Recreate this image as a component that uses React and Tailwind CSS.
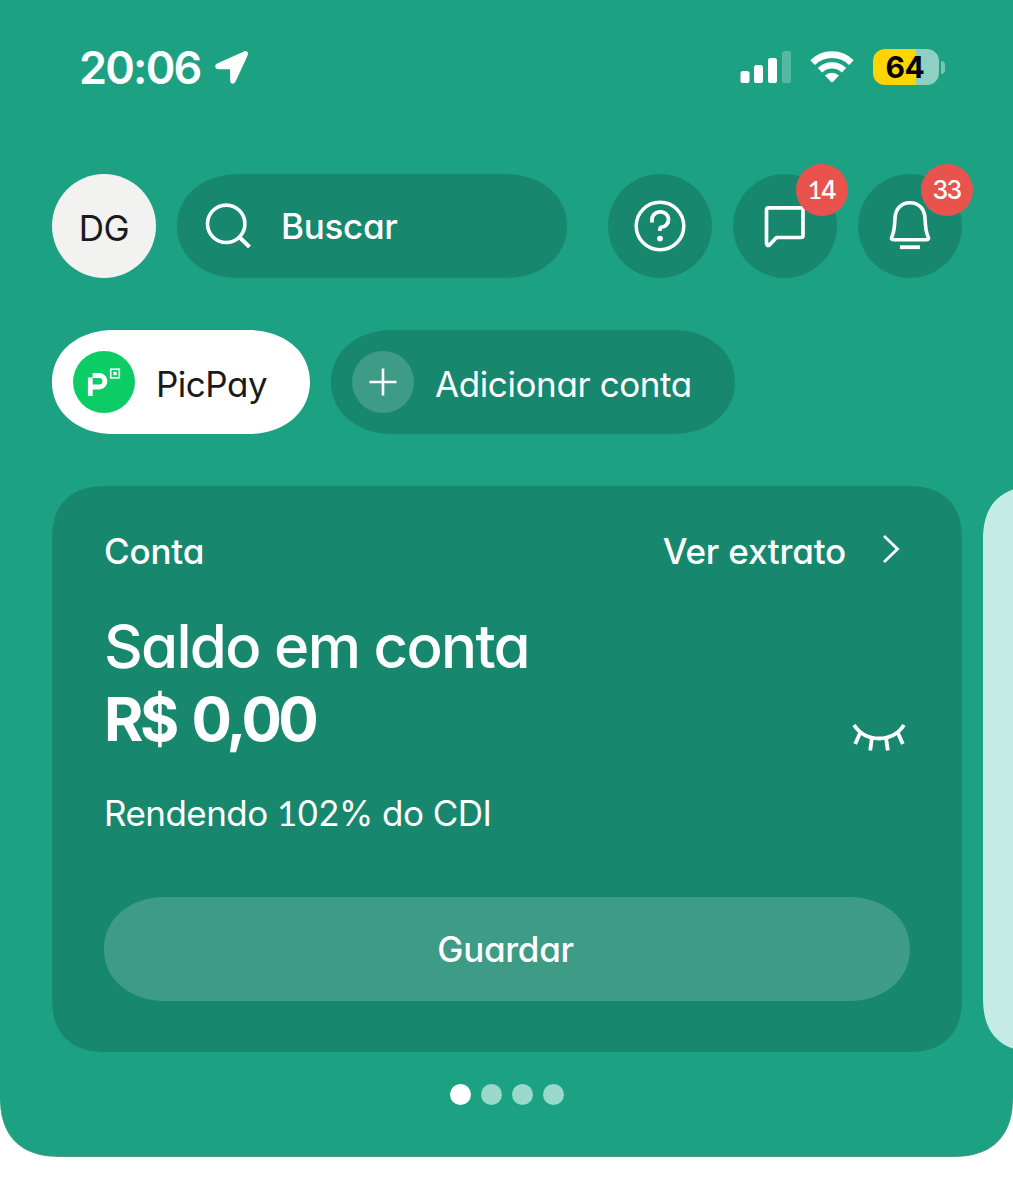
import React from 'react';

const StatusBar = () => {
  return (
    <div className="flex h-[36px] items-center justify-between pl-[27px] pr-[68px]">
      <div className="flex items-center">
        <span className="w-[135px] whitespace-nowrap pt-[2px] text-[45px] font-semibold leading-[36px] tracking-[-1.8px]">20:06</span>
        <svg className="h-[36px] w-[36px] translate-y-px" viewBox="0 0 36 36" fill="white" stroke="white" strokeWidth="3" strokeLinejoin="round">
          <path d="M30.6 2.8C32.2 2.2 33 3.2 32.2 4.8L20.2 31C19.4 32.8 17.6 32.4 17.6 30.4V19.6C17.6 18.6 16.8 17.8 15.8 17.8H4.6C2.4 17.8 2 15.8 3.8 14.9Z" />
        </svg>
      </div>

      <div className="flex items-center">
        <svg className="h-[34px] w-[52px]" viewBox="0 0 52 34" fill="white">
          <rect x="0.5" y="21" width="9" height="12" rx="2.6" />
          <rect x="14" y="15" width="9" height="18" rx="2.6" />
          <rect x="28" y="8" width="9" height="25" rx="2.6" />
          <rect x="42" y="1" width="9" height="32" rx="2.6" opacity="0.25" />
        </svg>
        <svg className="ml-[17px] h-[34px] w-[46px]" viewBox="0 0 46 34" fill="none">
          <path d="M3.6 12.6A27.5 27.5 0 0 1 42.4 12.6" stroke="white" strokeWidth="6.6" />
          <path d="M11 20.3A17 17 0 0 1 35 20.3" stroke="white" strokeWidth="6.2" />
          <path d="M16 25.6A10 10 0 0 1 30 25.6L24 31.8Q23 32.8 22 31.8Z" fill="white" />
        </svg>
        <div className="ml-[18px] flex h-[36px] w-[66px] items-center justify-center rounded-[12px] bg-linear-to-r from-[#ffd500] from-[65%] to-[#8ed0c1] to-[65%] pr-[2px]">
          <span className="text-[30px] font-bold leading-none tracking-[-0.5px] text-black">64</span>
        </div>
        <div className="ml-[2px] h-[13px] w-[4px] rounded-r-[4px] bg-[#77c6b4]" />
      </div>
    </div>
  );
};

const RoundButton = ({ badge, children }) => {
  return (
    <div className="relative flex h-[104px] w-[104px] items-center justify-center rounded-full bg-[#17886e]">
      {children}
      {badge && (
        <div className="absolute -right-[11px] -top-[10px] flex h-[52px] w-[52px] items-center justify-center rounded-full bg-[#e9534e] pr-px text-[25px] font-medium leading-none tracking-[-1.7px]">
          <span>{badge}</span>
        </div>
      )}
    </div>
  );
};

const TopBar = () => {
  return (
    <div className="flex h-[104px]">
      <div className="flex h-[104px] w-[104px] items-center justify-center rounded-full bg-[#f2f2f1] pt-[4px] text-[35px] tracking-[-0.5px] text-[#1a1a1a]">
        DG
      </div>
      <div className="ml-[21px] flex w-[390px] items-center rounded-[62px/52px] bg-[#17886e] pl-[28px] [corner-shape:superellipse(1.07)]">
        <svg className="h-[48px] w-[48px] -translate-y-[2px]" viewBox="0 0 48 48" fill="none" stroke="white" strokeWidth="3.6">
          <circle cx="21.2" cy="23.8" r="18.7" />
          <path d="M34.2 37L44.5 47" strokeWidth="4" />
        </svg>
        <span className="ml-[28px] text-[35px] font-medium tracking-[-0.3px]">Buscar</span>
      </div>

      <div className="ml-[41px] flex gap-[21px]">
        <RoundButton>
          <svg className="h-[52px] w-[52px]" viewBox="0 0 52 52" fill="none" stroke="white" strokeWidth="3.5">
            <circle cx="26" cy="26" r="23.8" />
            <path d="M18 22.4V20.6A8.3 7.8 0 1 1 26.8 27.4Q25.8 27.8 25.8 31" strokeWidth="3.8" />
            <circle cx="26" cy="38.6" r="2.9" fill="white" stroke="none" />
          </svg>
        </RoundButton>
        <RoundButton badge={<><span className="font-[Lato]">1</span>4</>}>
          <svg className="h-[44px] w-[44px]" viewBox="0 0 44 44" fill="none" stroke="white" strokeWidth="3.7" strokeLinejoin="round">
            <path d="M5.5 3.8H38A2 2 0 0 1 40 5.8V31.5A2 2 0 0 1 38 33.5H13.5L6.4 41Q3.5 42.5 3.5 39V5.8A2 2 0 0 1 5.5 3.8Z" />
          </svg>
        </RoundButton>
        <RoundButton badge="33">
          <svg className="h-[52px] w-[44px]" viewBox="0 0 44 52" fill="none" stroke="white" strokeWidth="3.6" strokeLinejoin="round">
            <path d="M22 2.8C12.4 2.8 7.4 9.6 7 18.5C6.6 27 6.4 31.5 4.1 36.2C2.9 38.6 3.4 39.8 5.6 39.8H38.4C40.6 39.8 41.1 38.6 39.9 36.2C37.6 31.5 37.4 27 37 18.5C36.6 9.6 31.6 2.8 22 2.8Z" />
            <path d="M12 47.2H32" strokeWidth="3.8" />
          </svg>
        </RoundButton>
      </div>
    </div>
  );
};

const AccountTabs = () => {
  return (
    <div className="mt-[52px] flex h-[104px] gap-[21px] text-[35px]">
      <div className="flex w-[258px] items-center rounded-[62px/52px] bg-white pl-[21px] text-[#1a1a1a] [corner-shape:superellipse(1.07)]">
        <div className="h-[62px] w-[62px] rounded-full bg-[#0bcc65]">
          <svg className="h-[62px] w-[62px]" viewBox="0 0 62 62" fill="none" stroke="white">
            <path d="M17.3 26.5V45" strokeWidth="4.8" />
            <path d="M19.6 24.6H26.2A5.7 5.7 0 0 1 26.2 36H17" strokeWidth="5" />
            <rect x="37.7" y="18.2" width="8.6" height="8.6" strokeWidth="1.6" />
            <rect x="40.3" y="20.8" width="3.4" height="3.4" fill="white" stroke="none" />
          </svg>
        </div>
        <span className="ml-[21px] pt-[4px] tracking-[-0.5px]">PicPay</span>
      </div>
      <div className="flex w-[404px] items-center rounded-[62px/52px] bg-[#17886e] pl-[21px] [corner-shape:superellipse(1.07)]">
        <div className="flex h-[62px] w-[62px] items-center justify-center rounded-full bg-[#3e9b86]">
          <svg className="h-[28px] w-[28px]" viewBox="0 0 28 28" stroke="white" strokeWidth="2.6">
            <path d="M14 0.5V27.5M0.5 14H27.5" />
          </svg>
        </div>
        <span className="ml-[21px] whitespace-nowrap pt-[4px] tracking-[-0.4px]">Adicionar conta</span>
      </div>
    </div>
  );
};

const BalanceCard = () => {
  return (
    <div className="flex h-[566px] w-[910px] shrink-0 flex-col rounded-[55px] bg-[#17886e] px-[52px] pb-[51px] pt-[52px] [corner-shape:superellipse(1.3)]">
      <div className="flex h-[26px] items-center justify-between text-[35px] font-medium">
        <span className="tracking-[-0.2px]">Conta</span>
        <div className="flex items-center">
          <span className="mr-[36px] tracking-[-0.2px]">Ver extrato</span>
          <svg className="mr-[10px] h-[30px] w-[18px] -translate-y-[2px]" viewBox="0 0 18 30" fill="none" stroke="white" strokeWidth="2.8">
            <path d="M2 2L15.5 15L2 28" />
          </svg>
        </div>
      </div>

      <div className="mt-[46px] flex justify-between">
        <div className="text-[60px] leading-[73px]">
          <div className="font-medium tracking-[-1.7px]">Saldo em conta</div>
          <div className="font-bold tracking-[-3.5px] [word-spacing:5px]">R$ 0,00</div>
        </div>
        <svg className="mr-[4px] mt-[112px] h-[30px] w-[54px]" viewBox="0 0 54 30" fill="none" stroke="white" strokeWidth="3.8">
          <path d="M2 3Q11 16.5 27 16.5Q43 16.5 52 3" />
          <path d="M8.5 10L3.2 22M20 15.5L18.2 28.5M34 15.5L35.8 28.5M45.5 10L50.8 22" />
        </svg>
      </div>

      <div className="mt-[31px] text-[35px] leading-[50px] tracking-[-0.55px]">
        Rendendo <span className="font-[Lato]">1</span>02% do CDI
      </div>

      <div className="mt-auto flex h-[104px] items-center justify-center rounded-[62px/52px] bg-[#3e9b86] pr-[3px] text-[35px] font-medium tracking-[-0.3px] [corner-shape:superellipse(1.07)]">
        Guardar
      </div>
    </div>
  );
};

export default function App() {
  const pages = [0, 1, 2, 3];

  return (
    <div className="h-[1200px] w-[1013px] overflow-hidden bg-white font-[Inter,sans-serif] text-white [font-feature-settings:'cv11']">
      <div className="h-[1157px] rounded-b-[62px] border-b border-[#4d9483] bg-[#1ca283] pl-[52px] pt-[49px] [corner-shape:superellipse(1.3)]">
        <StatusBar />
        <div className="mt-[89px]">
          <TopBar />
        </div>
        <AccountTabs />

        <div className="mt-[52px] flex gap-[21px] overflow-hidden">
          <BalanceCard />
          <div className="h-[566px] w-[910px] shrink-0 rounded-[55px] bg-[#c4ece4] [corner-shape:superellipse(1.3)]" />
        </div>

        <div className="mt-[32px] flex justify-center gap-[10px] pr-[51px]">
          {pages.map(page => (
            <div key={page} className={`h-[21px] w-[21px] rounded-full ${page === 0 ? 'bg-white' : 'bg-[#99d8ca]'}`} />
          ))}
        </div>
      </div>
    </div>
  );
}
